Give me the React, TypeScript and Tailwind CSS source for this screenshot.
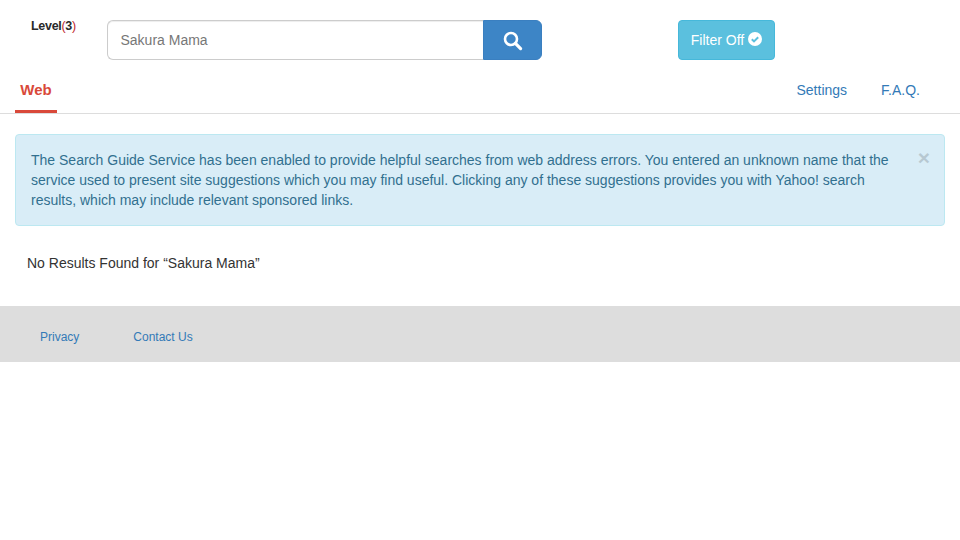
import React from "react";

export default function App() {
  return (
    <div className="min-h-[540px] bg-white font-['Liberation_Sans',Arial,sans-serif] text-[14px] leading-[20px] text-[#333]">
      <header className="flex h-[73px] items-start pt-5">
        <div className="flex h-[12px] w-[107px] items-center justify-start pl-[31px] font-bold text-[12.5px] leading-[12px] tracking-[-0.3px] text-[#2a2a2a]">
          Level<span className="font-normal text-[#c0282d]">(</span>3<span className="font-normal text-[#c0282d]">)</span>
        </div>
        <div className="flex h-10 w-[435px]">
          <div className="flex h-10 w-[376px] items-center rounded-l-[6px] border border-[#ccc] border-r-0 bg-white pl-[12.5px] text-[14px] text-[#777] shadow-[inset_0_1px_1px_rgba(0,0,0,0.075)]">
            Sakura Mama
          </div>
          <button className="flex h-10 w-[59px] items-center justify-center rounded-r-[6px] border border-[#3a7fc0] bg-[#3d85c6]">
            <svg width="20" height="20" viewBox="0 0 20 20" fill="none" className="mt-[2px] ml-[1px]">
              <circle cx="8" cy="8" r="6" stroke="white" strokeWidth="2.6" />
              <path d="M12.4 12.4 L17.6 17.6" stroke="white" strokeWidth="3.2" strokeLinecap="round" />
            </svg>
          </button>
        </div>
        <button className="ml-[136px] flex h-10 w-[97px] items-center justify-center gap-[4px] rounded-[4px] border border-[#46b8da] bg-[#5bc0de] text-[14px] text-white">
          Filter Off
          <svg width="14" height="14" viewBox="0 0 14 14" className="mb-[2px]">
            <circle cx="7" cy="7" r="7" fill="white" />
            <path d="M3.8 7.2 L6 9.4 L10.2 5.2" fill="none" stroke="#5bc0de" strokeWidth="2" />
          </svg>
        </button>
      </header>

      <nav className="flex h-[41px] items-stretch justify-between border-b border-[#ddd] pl-[15px]">
        <a className="flex h-[40px] w-[42px] items-center justify-center border-b-[3px] border-[#d9493a] pb-[3px] text-[15px] font-bold text-[#d9493a]">
          Web
        </a>
        <div className="flex items-center gap-[34px] pr-[41px] pb-[7px] pl-[1px] text-[#337ab7]">
          <a className="translate-x-[1px]">Settings</a>
          <a className="translate-x-[1px]">F.A.Q.</a>
        </div>
      </nav>

      <div className="relative mx-[15px] mt-5 h-[92px] rounded-[4px] border border-[#bce8f1] bg-[#d9edf7] py-[15px] pl-[15px] pr-[35px] text-[#31708f]">
        <p>
          The Search Guide Service has been enabled to provide helpful searches from web address errors. You entered an unknown name that the service used to present site suggestions which you may find useful. Clicking any of these suggestions provides you with Yahoo! search results, which may include relevant sponsored links.
        </p>
        <span className="absolute right-[14px] top-[12px] text-[21px] font-bold leading-[21px] text-[#000] opacity-[0.15]">×</span>
      </div>

      <p className="mt-[27px] pl-[27px]">No Results Found for “Sakura Mama”</p>

      <footer className="mt-[33px] flex h-[56px] items-center gap-[54px] bg-[#ddd] pl-10 pt-[6px] text-[12px] text-[#337ab7]">
        <a>Privacy</a>
        <a>Contact Us</a>
      </footer>
    </div>
  );
}
